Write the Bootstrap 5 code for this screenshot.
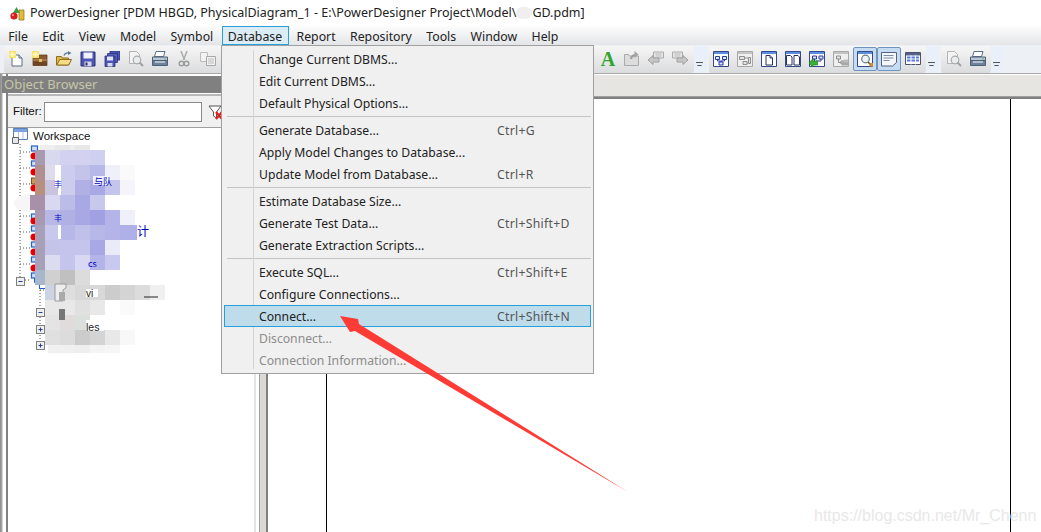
<!DOCTYPE html>
<html lang="en">
<head>
<meta charset="utf-8">
<title>PowerDesigner</title>
<link rel="stylesheet" href="https://cdn.jsdelivr.net/npm/bootstrap@5.3.0/dist/css/bootstrap.min.css">
<style>
html,body{height:100%;margin:0;overflow:hidden;background:#fff}
.pd-app{height:532px;width:1041px;position:relative;font-family:"Noto Sans","Noto Sans CJK SC",sans-serif;font-size:12.3px;color:#222;overflow:hidden}
.pd-title{height:26px;padding-left:10px;gap:5px;font-size:12.5px;color:#222;background:#fff}
.pd-blur{display:inline-block;width:16px;height:12px;background:#efefef;border-radius:6px;vertical-align:-2px}
.pd-menubar{height:19px;padding-left:1px;background:linear-gradient(#fdfdfd,#e3e5e8)}
.pd-mi{padding:0 6.2px;height:19px;line-height:19px;border:1px solid transparent}
.pd-mi.on{border-color:#26a0da;background:#dcecf5;margin-left:2px;padding-left:4.2px}
.pd-tools{height:29px;background:#edf0f5;padding-top:1px;border-bottom:1px solid #a8a8a8}
.pd-tg{height:27px;border-radius:3px;background:linear-gradient(#f6f6f6,#dbdcde);display:flex;align-items:center;padding-bottom:1px}
.pd-ts{width:24px;height:24px;display:flex;align-items:center;justify-content:center}
.pd-ts.sel{background:#c6dcf3;border:1px solid #6e93bd;border-radius:2px}
.pd-ts svg{width:16px;height:16px;display:block}
.pd-a{font-family:"Liberation Serif",serif;font-weight:700;font-size:20px;line-height:16px;color:#2fa52f}
.pd-grip{width:13px;height:27px;position:relative;margin-right:2px;background:#e9f0f9;border-radius:0 3px 3px 0}
.pd-grip::after{content:"";position:absolute;left:2px;bottom:5px;width:7px;height:6px;border-top:1px solid #555;background:linear-gradient(to bottom,transparent 2px,#555 2px,#555 3px,transparent 3px);clip-path:polygon(0 0,100% 0,100% 34%,50% 100%,0 34%)}
.pd-main{height:458px}
.pd-edge{width:8px;background:linear-gradient(to right,#8c8c8c 0,#a8a8a8 2px,#fff 3px,#fff 6px,#808080 6px,#808080 8px)}
.pd-left{width:245px}
.pd-oh{height:17px;margin-left:-6px;margin-top:2px;background:#808080;color:#c6c6a8;font-size:13px;line-height:17px;padding-left:2px;font-family:"Noto Sans",sans-serif}
.pd-filter{height:34px;background:#f0f0f0;border-bottom:1px solid #a0a0a0;border-top:2px solid #b8b8b8;margin-top:1px;padding-left:5px;font-family:"Liberation Sans",sans-serif;font-size:11.5px;color:#111;gap:2px}
.pd-filter .pd-in{width:158px;height:20px;background:#fff;border:1px solid #8a8a8a}
.pd-tree{display:block}
.pd-split{width:17px;background:linear-gradient(to right,#fff 0,#fff 1px,#e4e4e4 1px,#e4e4e4 3px,#fff 3px,#fff 6px,#a0a0a0 6px,#a0a0a0 7px,#dcd9d4 7px,#dcd9d4 13px,#808080 13px,#808080 15px,#fff 15px)}
.pd-strip{height:22px;margin-top:1px;background:#e7e5e1;border-bottom:1px solid #a0a0a0}
.pd-bar{height:2px;background:#808080;margin-bottom:0}
.pd-canvas{flex:1 1 auto;background:#fff}
.pd-page{margin-left:56px;width:685px;height:100%;border-left:1px solid #000;border-right:1px solid #000}
.pd-menu.dropdown-menu{display:block;position:absolute;left:221px;top:45px;width:373px;height:329px;border:1px solid #a0a0a0;border-radius:0;padding:2px;margin:0;background:#f0f0f0;font-size:12.2px;z-index:5}
.pd-menu::before{content:"";position:absolute;left:31px;top:4px;bottom:4px;width:1px;background:#d4d4d4}
.pd-menu .dropdown-item{height:22px;line-height:20px;padding:1px 0 0 34px;color:#222;border:1px solid transparent;background:transparent;display:flex;position:relative}
.pd-menu .dropdown-item .pd-sc{position:absolute;left:272px;color:#555;letter-spacing:.3px}
.pd-menu .dropdown-item.hi{background:#bfdcea;border-color:#26a0da}
.pd-menu .dropdown-item.disabled{color:#8c8c8c}
.pd-menu .dropdown-divider{margin:2px 0 2px 3px;height:1px;border:0;background:#c4c4c4;opacity:1;width:364px}
.pd-over{position:absolute;left:0;top:0;pointer-events:none;z-index:6}
.pd-mark{position:absolute;left:814px;top:506px;font-family:"Liberation Sans",sans-serif;font-size:16px;color:#e8e8e8;line-height:20px;z-index:4}
.mc rect{width:15px;height:15px}
</style>
</head>
<body>
<svg width="0" height="0" class="position-absolute">
<defs>
<symbol id="i-new" viewBox="0 0 16 16"><path d="M4 4h7l3 3v8H4z" fill="#fff" stroke="#5b6b80"/><path d="M11 4v3h3" fill="#cfd8e6" stroke="#5b6b80"/><path d="M1 0h7v7H1z" fill="#f7e26b"/><path d="M3.500 1h2v5h-2zM1.500 2.500h6v2h-6z" fill="#fff7b8"/></symbol>
<symbol id="i-case" viewBox="0 0 16 16"><path d="M5 4h10v10.500H1V6z" fill="#8a5a30" stroke="#5a3718" stroke-width=".7"/><path d="M1 9h14" stroke="#c9965f"/><path d="M1 10.500h14v4H1z" fill="#6f4522"/><path d="M7 8h3v3H7z" fill="#e2c068"/><path d="M0 0h7v7H0z" fill="#f7e26b"/><path d="M2.500 1h2v5h-2zM.5 2.500h6v2h-6z" fill="#fff7b8"/></symbol>
<symbol id="i-open" viewBox="0 0 16 16"><path d="M.5 5.500h5l1 1.500h6v7H.5z" fill="#e0b64a" stroke="#8e6f1e"/><path d="M.8 14l3-5.500h11.700l-2.700 5.500z" fill="#f7dc86" stroke="#8e6f1e"/><path d="M8 4.500C9 2 11 1.500 13 2" fill="none" stroke="#5b7896" stroke-width="1.300"/><path d="M12 0l3.500 2L12 4z" fill="#5b7896"/></symbol>
<symbol id="i-save" viewBox="0 0 16 16"><path d="M1 1h14v14H1z" fill="#4b55b5" stroke="#2a2f78"/><path d="M3.500 1.500h9v6h-9z" fill="#eef2fb"/><path d="M4.500 10.500h7v4.500h-7z" fill="#d7d9e6"/><path d="M5.500 11.500h2v3h-2z" fill="#2a2f78"/></symbol>
<symbol id="i-saveall" viewBox="0 0 16 16"><path d="M6 0h10v9H6z" fill="#4b55b5" stroke="#2a2f78" stroke-width=".8"/><path d="M3.500 2.500h10v9h-10z" fill="#5560bf" stroke="#2a2f78" stroke-width=".8"/><path d="M1 5h10v10.500H1z" fill="#4b55b5" stroke="#2a2f78" stroke-width=".8"/><path d="M3 5.500h6v4H3z" fill="#dfe3f5"/><path d="M3.500 12h5v3.500h-5z" fill="#d7d9e6"/></symbol>
<symbol id="i-prev" viewBox="0 0 16 16"><path d="M1.500 .5h7l3 3v9h-10z" fill="#f4f4f4" stroke="#b4b4b4"/><circle cx="9" cy="9" r="3.800" fill="#e8eef0" stroke="#a8a8a8" stroke-width="1.200"/><path d="M11.500 11.500l3.500 3.500" stroke="#a0a0a0" stroke-width="2"/></symbol>
<symbol id="i-print" viewBox="0 0 16 16"><path d="M4 .5h9l-1.500 5h-9z" fill="#fff" stroke="#5b6f88"/><path d="M.5 6h15v6.500H.5z" fill="#b9c6d6" stroke="#4e6078"/><path d="M.5 9.500h15v5H.5z" fill="#6d829c" stroke="#4e6078"/><path d="M3 10.500h10v1H3z" fill="#fff"/><path d="M12 7.500h2v1h-2z" fill="#5ec06a"/></symbol>
<symbol id="i-cut" viewBox="0 0 16 16"><path d="M5 0l3.500 9M11 0L7.500 9" stroke="#a8a8a8" stroke-width="1.400" fill="none"/><circle cx="5.500" cy="12.500" r="2.300" fill="none" stroke="#9c9c9c" stroke-width="1.400"/><circle cx="10.500" cy="12.500" r="2.300" fill="none" stroke="#9c9c9c" stroke-width="1.400"/></symbol>
<symbol id="i-copy" viewBox="0 0 16 16"><path d="M.5 1.500h7v9h-7z" fill="#f2f2f2" stroke="#bdbdbd"/><path d="M6.500 5.500h9v9h-9z" fill="#f2f2f2" stroke="#a8a8a8"/><path d="M8 8h6M8 10h6M8 12h6" stroke="#bcbcbc"/></symbol>
<symbol id="i-up" viewBox="0 0 16 16"><path d="M.5 3.500h4l1 1.500h9v9.500H.5z" fill="#dcdcdc" stroke="#aaa"/><path d="M7 8c.5-3 2.500-4 5-4" fill="none" stroke="#9a9a9a" stroke-width="2"/><path d="M10.500 0l4 3.500-4 3.500z" fill="#a4a4a4"/></symbol>
<symbol id="i-back" viewBox="0 0 16 16"><path d="M5.500 1h10v6h-10z" fill="#e6e6e6" stroke="#aaa"/><path d="M7.500 3h6M7.500 5h6" stroke="#bbb"/><path d="M0 9l5-4.500v2.500h6v4H5v2.500z" fill="#c6c6c6" stroke="#a0a0a0"/></symbol>
<symbol id="i-fwd" viewBox="0 0 16 16"><path d="M.5 1h10v6H.5z" fill="#e6e6e6" stroke="#aaa"/><path d="M2.500 3h6M2.500 5h6" stroke="#bbb"/><path d="M16 9l-5-4.500v2.500H5v4h6v2.500z" fill="#c6c6c6" stroke="#a0a0a0"/></symbol>
<symbol id="i-win" viewBox="0 0 16 16"><path d="M.5.5h15v15H.5z" fill="#fff" stroke="#34488a"/><path d="M1 1h14v2H1z" fill="#5d8fe0"/></symbol>
<symbol id="i-wing" viewBox="0 0 16 16"><path d="M.5.5h15v15H.5z" fill="#efefef" stroke="#a8a8a8"/><path d="M1 1h14v2H1z" fill="#c4c4c4"/></symbol>
<symbol id="i-dia" viewBox="0 0 16 16"><use href="#i-win"/><path d="M2.500 5.500h4v3h-4zM9.500 5.500h4v3h-4zM6 11h4v3H6z" fill="#dfe8ff" stroke="#2338a0"/><path d="M4.500 8.500V10H8v1M11.500 8.500V10H8" fill="none" stroke="#2338a0"/></symbol>
<symbol id="i-diag" viewBox="0 0 16 16"><use href="#i-wing"/><path d="M2.500 5.500h5v3h-5zM6 10.500h4v3H6zM11.500 6.500h2v6h-2z" fill="#e4e4e4" stroke="#8e8e8e"/><path d="M7.500 7h4M10 12h1.500" fill="none" stroke="#8e8e8e"/></symbol>
<symbol id="i-doc" viewBox="0 0 16 16"><use href="#i-win"/><path d="M5 4.500h4l2.500 2.500v7H5z" fill="#fff" stroke="#27335e"/><path d="M9 4.500V7h2.500" fill="#c6cfe6" stroke="#27335e"/></symbol>
<symbol id="i-docs" viewBox="0 0 16 16"><use href="#i-win"/><path d="M1.500 4.500h4l1.500 1.500v8H1.500zM9 4.500h4l1.500 1.500v8H9z" fill="#fff" stroke="#27335e"/></symbol>
<symbol id="i-dgr" viewBox="0 0 16 16"><use href="#i-win"/><path d="M3.500 5h4v3h-4zM10 5h4v3h-4z" fill="#dfe8ff" stroke="#2338a0"/><path d="M5.500 8v2M12 8v2H7" fill="none" stroke="#2338a0"/><path d="M0 12l4-4.500V10h4.500v4H4v2.500z" fill="#36b336" stroke="#1c7a1c" stroke-width=".7"/></symbol>
<symbol id="i-dgg" viewBox="0 0 16 16"><use href="#i-wing"/><path d="M3.500 5h4v3h-4zM8 10h3.500v3H8z" fill="#e4e4e4" stroke="#8e8e8e"/><path d="M5.500 8v3.500H8" fill="none" stroke="#8e8e8e"/><path d="M9 10.500h7v4H9z" fill="#a8a8a8"/><path d="M11 8.500h4v3h-4z" fill="#bdbdbd"/></symbol>
<symbol id="i-find" viewBox="0 0 16 16"><use href="#i-win"/><circle cx="8.500" cy="8" r="3.800" fill="#eef3f5" stroke="#6a7a8a" stroke-width="1.200"/><path d="M11 11l3 3" stroke="#5a4a3a" stroke-width="1.500"/><path d="M12.500 12h3.500v3.500h-3.500z" fill="#d78a2a"/></symbol>
<symbol id="i-note" viewBox="0 0 16 16"><path d="M.5 1.500h15v10l-4 3.500H.5z" fill="#f4f6fa" stroke="#53627e"/><path d="M2.500 4.500h10M2.500 7h10M2.500 9.500h6" stroke="#7e8ca6"/></symbol>
<symbol id="i-table" viewBox="0 0 16 16"><path d="M.5 1.500h15v12H.5z" fill="#fff" stroke="#4a5268"/><path d="M1 2h14v2.500H1z" fill="#54618a"/><path d="M2 5.500h12v2H2zM2 8.500h12v2H2z" fill="#5a78e6"/><path d="M6 4.500v9M10.500 4.500v9" stroke="#fff"/></symbol>
</defs>
</svg>

<div class="pd-app">
  <div class="pd-title d-flex align-items-center">
    <svg width="15" height="15" viewBox="0 0 15 15" aria-hidden="true"><path d="M9 4h5v10H9z" fill="#e5b93a" stroke="#8a6a10" stroke-width=".7"/><path d="M3 7l3.500-6L10 7z" fill="#3aa046"/><circle cx="4" cy="10" r="3.600" fill="#d82020"/><circle cx="3" cy="9" r="1" fill="#f8a0a0"/></svg>
    <span>PowerDesigner [PDM HBGD, PhysicalDiagram_1 - E:\PowerDesigner Project\Model\<span class="pd-blur"></span>GD.pdm]</span>
  </div>

  <div class="pd-menubar d-flex">
    <div class="pd-mi">File</div><div class="pd-mi">Edit</div><div class="pd-mi">View</div><div class="pd-mi">Model</div><div class="pd-mi">Symbol</div><div class="pd-mi on">Database</div><div class="pd-mi">Report</div><div class="pd-mi">Repository</div><div class="pd-mi">Tools</div><div class="pd-mi">Window</div><div class="pd-mi">Help</div>
  </div>

  <div class="pd-tools d-flex">
    <div class="pd-tg ms-1" style="width:590px;padding-left:0">
      <div class="pd-ts"><svg><use href="#i-new"/></svg></div><div class="pd-ts"><svg><use href="#i-case"/></svg></div><div class="pd-ts"><svg><use href="#i-open"/></svg></div><div class="pd-ts"><svg><use href="#i-save"/></svg></div><div class="pd-ts"><svg><use href="#i-saveall"/></svg></div><div class="pd-ts"><svg><use href="#i-prev"/></svg></div><div class="pd-ts"><svg><use href="#i-print"/></svg></div><div class="pd-ts"><svg><use href="#i-cut"/></svg></div><div class="pd-ts"><svg><use href="#i-copy"/></svg></div>
    </div>
    <div class="pd-tg" style="width:101px;padding-left:3px;margin-left:-1px;">
      <div class="pd-ts"><span class="pd-a">A</span></div><div class="pd-ts"><svg><use href="#i-up"/></svg></div><div class="pd-ts"><svg><use href="#i-back"/></svg></div><div class="pd-ts"><svg><use href="#i-fwd"/></svg></div>
    </div>
    <div class="pd-grip"></div>
    <div class="pd-tg" style="width:217px">
      <div class="pd-ts"><svg><use href="#i-dia"/></svg></div><div class="pd-ts"><svg><use href="#i-diag"/></svg></div><div class="pd-ts"><svg><use href="#i-doc"/></svg></div><div class="pd-ts"><svg><use href="#i-docs"/></svg></div><div class="pd-ts"><svg><use href="#i-dgr"/></svg></div><div class="pd-ts"><svg><use href="#i-dgg"/></svg></div><div class="pd-ts sel"><svg><use href="#i-find"/></svg></div><div class="pd-ts sel"><svg><use href="#i-note"/></svg></div><div class="pd-ts"><svg><use href="#i-table"/></svg></div>
    </div>
    <div class="pd-grip"></div>
    <div class="pd-tg" style="width:50px;padding-left:1px">
      <div class="pd-ts"><svg><use href="#i-prev"/></svg></div><div class="pd-ts"><svg><use href="#i-print"/></svg></div>
    </div>
    <div class="pd-grip"></div>
  </div>

  <div class="pd-main d-flex">
    <div class="pd-edge flex-shrink-0"></div>
    <div class="pd-left flex-shrink-0 d-flex flex-column">
      <div class="pd-oh">Object Browser</div>
      <div class="pd-filter d-flex align-items-center">
        <span>Filter:</span><div class="pd-in"></div>
        <svg class="ms-1" width="16" height="16" viewBox="0 0 16 16" aria-hidden="true"><path d="M1 2h12L8.500 8v6L5.500 12V8z" fill="#fff" stroke="#555"/><path d="M8 8l6 7M14 8l-6 7" stroke="#e02020" stroke-width="2.200"/></svg>
      </div>
      <svg class="pd-tree" width="245" height="404" viewBox="8 128 245 404" role="img" aria-label="Object browser tree">
        <g fill="none" stroke="#555" stroke-dasharray="1 2">
          <path d="M20 144V277M20 152H31M20 168H31M20 184H31M20 216H31M20 232H31M20 248H31M20 264H31M25 280H31M40 284V345M40 290H57M44 312H57"/>
        </g>
        <path d="M13.500 128.500h14v11h-14z" fill="#fff" stroke="#5b7fb8"/><path d="M14 129h13v3H14z" fill="#7ba2e0"/><path d="M18.500 132v7M23 132v7" stroke="#a8c0e6"/><path d="M12.500 137.500h6v6h-6z" fill="#e4e8ee" stroke="#666"/>
        <text x="33" y="140" font-family="Liberation Sans,sans-serif" font-size="11.500" fill="#111">Workspace</text>
        <g fill="#cfe0f8" stroke="#2460c8" stroke-width="1.200">
          <rect x="31.500" y="146" width="6" height="5"/><rect x="31.500" y="161" width="6" height="5"/><rect x="31.500" y="214" width="6" height="5"/><rect x="31.500" y="226" width="6" height="5"/><rect x="31.500" y="242" width="6" height="5"/><rect x="31.500" y="257" width="6" height="5"/><rect x="31.500" y="273" width="6" height="5"/>
        </g>
        <rect x="31.500" y="178" width="6" height="6" fill="#c89860" stroke="#7a5020"/>
        <g fill="#e60000">
          <circle cx="34" cy="156" r="3.500"/><circle cx="34" cy="172" r="3.500"/><circle cx="34" cy="188" r="3.500"/><circle cx="34" cy="221" r="3.500"/><circle cx="34" cy="237" r="3.500"/><circle cx="34" cy="252" r="3.500"/><circle cx="34" cy="268" r="3.500"/>
        </g>
        <g fill="#eee" stroke="#808080">
          <rect x="16.500" y="277.500" width="8" height="8"/><rect x="36.500" y="308.500" width="8" height="8"/><rect x="36.500" y="325.500" width="8" height="8"/><rect x="36.500" y="341.500" width="8" height="8"/>
        </g>
        <path d="M18.500 281.500h4M38.500 312.500h4M38.500 329.500h4M40.500 327.500v4M38.500 345.500h4M40.500 343.500v4" stroke="#2040a0"/>
        <path d="M34.500 278v4.500h5" fill="none" stroke="#2460c8"/>
        <rect x="39.500" y="283.500" width="6" height="5" fill="#fff" stroke="#2460c8"/>
        <ellipse cx="30" cy="203" rx="16" ry="9" fill="#f6f6f6"/>
        <g class="mc" shape-rendering="crispEdges">
          <rect x="40" y="145" fill="#eee"/><rect x="55" y="145" fill="#e8e8e8" /><rect x="70" y="145" fill="#eee"/><rect x="75" y="145" fill="#e8e8e8"/>
          <rect x="35" y="150" fill="#a89ab0" style="width:10px"/><rect x="45" y="150" fill="#d8d8ee"/><rect x="60" y="150" fill="#d2d2f0"/><rect x="75" y="150" fill="#d2d2f0"/><rect x="90" y="150" fill="#cfcff0"/>
          <rect x="35" y="165" fill="#b09090" style="width:10px"/><rect x="45" y="165" fill="#dcdcec"/><rect x="60" y="165" fill="#ccccee"/><rect x="75" y="165" fill="#c4c4ea"/><rect x="90" y="165" fill="#b8b8e8"/><rect x="105" y="165" fill="#f0f0fa"/><rect x="120" y="165" fill="#fafafa"/>
          <rect x="35" y="180" fill="#b89080" style="width:10px"/><rect x="45" y="180" fill="#c8c4e0"/><rect x="60" y="180" fill="#ccccee"/><rect x="75" y="180" fill="#b0b0e4"/><rect x="90" y="180" fill="#a8a8e4"/><rect x="105" y="180" fill="#c4c4ec"/><rect x="120" y="180" fill="#f4f4fa"/>
          <rect x="30" y="195" fill="#a890a8"/><rect x="45" y="195" fill="#d8d8f0"/><rect x="60" y="195" fill="#bcbce8"/><rect x="75" y="195" fill="#a8a8e4"/><rect x="90" y="195" fill="#c8c8ec"/>
          <rect x="35" y="210" fill="#a898b0" style="width:10px"/><rect x="45" y="210" fill="#b8b8e6"/><rect x="60" y="210" fill="#b0b0e4"/><rect x="75" y="210" fill="#a8a8e4"/><rect x="90" y="210" fill="#a0a0e2"/><rect x="105" y="210" fill="#b4b4e8"/><rect x="120" y="210" fill="#f0f0fa"/>
          <rect x="35" y="225" fill="#a8a0b8" style="width:10px"/><rect x="45" y="225" fill="#c8c8ec"/><rect x="60" y="225" fill="#b8b8e8"/><rect x="75" y="225" fill="#c0c0ea"/><rect x="90" y="225" fill="#b8b8e8"/><rect x="105" y="225" fill="#b4b4e8"/><rect x="120" y="225" fill="#b0b0e8" style="width:17px"/>
          <rect x="35" y="240" fill="#a8a0b8" style="width:10px"/><rect x="45" y="240" fill="#c4c4e8"/><rect x="60" y="240" fill="#c4c4ec"/><rect x="75" y="240" fill="#c4c4ec"/><rect x="90" y="240" fill="#a8a8e4"/><rect x="105" y="240" fill="#ebebf7"/>
          <rect x="35" y="255" fill="#a8a0b8" style="width:10px"/><rect x="45" y="255" fill="#dcdcf0"/><rect x="60" y="255" fill="#c4c4ec"/><rect x="75" y="255" fill="#d8d8f4"/><rect x="90" y="255" fill="#b4b4e8"/><rect x="105" y="255" fill="#c8c8f0"/>
          <rect x="35" y="270" fill="#a8b8cc" style="width:10px"/><rect x="45" y="270" fill="#d0d0d0"/><rect x="60" y="270" fill="#c0c0c0"/><rect x="75" y="270" fill="#dcdcdc"/>
          <rect x="45" y="285" fill="#ccd4e4"/><rect x="60" y="285" fill="#dedede"/><rect x="75" y="285" fill="#d8d8d8"/><rect x="90" y="285" fill="#d8d8d8"/><rect x="105" y="285" fill="#ccc"/><rect x="120" y="285" fill="#d4d4d4"/><rect x="135" y="285" fill="#dcdcdc"/><rect x="150" y="285" fill="#f0f0f0"/>
          <rect x="45" y="300" fill="#e8e8e8"/><rect x="60" y="300" fill="#e8e8e8"/><rect x="75" y="300" fill="#e0e0e0"/><rect x="90" y="300" fill="#e8e8e8"/><rect x="120" y="300" fill="#fafafa"/>
          <rect x="45" y="315" fill="#e4e4e4"/><rect x="60" y="315" fill="#e0dcdc"/><rect x="75" y="315" fill="#dce0dc"/>
          <rect x="45" y="330" fill="#e0e0e0"/><rect x="60" y="330" fill="#dcdcdc"/><rect x="75" y="330" fill="#ccc"/><rect x="90" y="330" fill="#d4d4d4"/><rect x="105" y="330" fill="#e8e8e8"/><rect x="120" y="330" fill="#f8f8f8"/>
          <rect x="48" y="345" fill="#f0f0f0" style="height:8px"/><rect x="60" y="345" fill="#f0f0f0" style="height:8px"/><rect x="75" y="345" fill="#eee" style="height:8px"/><rect x="90" y="345" fill="#f4f4f4" style="height:8px"/><rect x="105" y="345" fill="#f6f6f6" style="height:8px"/>
        </g>
        <path d="M55 165h6v30h-3v-8h-3z" fill="#fff"/><path d="M58 225h3v14h-3z" fill="#fff"/><path d="M93 176h15v9H93z" fill="#fff" opacity=".8"/><path d="M86 289h12v8H86z" fill="#fff"/><path d="M86 320h18v11H86z" fill="#fff"/>
        <g font-family="Noto Sans CJK SC,Noto Sans,sans-serif" font-size="8" fill="#0000c0">
          <text x="54" y="187">丰</text><text x="94" y="185" font-size="9">与队</text><text x="54" y="221">丰</text><text x="137" y="236" font-size="12">计</text><text x="88" y="267" font-size="9">cs</text>
        </g>
        <text x="86" y="331" font-family="Liberation Sans,sans-serif" font-size="10.500" fill="#222">les</text>
        <text x="86" y="297" font-family="Liberation Sans,sans-serif" font-size="10" fill="#222">vi</text>
        <path d="M144 297h14" stroke="#222"/>
        <path d="M55 284h11v4l-3 2v11h-8z" fill="#eee" stroke="#999"/><path d="M59 292h6v9h-6z" fill="#aaa"/><path d="M59 309h6v11h-6z" fill="#777"/>
      </svg>
    </div>
    <div class="pd-split flex-shrink-0"></div>
    <div class="d-flex flex-column flex-grow-1">
      <div class="pd-strip"></div>
      <div class="pd-bar"></div>
      <div class="pd-canvas"><div class="pd-page"></div></div>
    </div>
  </div>

  <div class="pd-menu dropdown-menu">
    <a class="dropdown-item">Change Current DBMS...</a>
    <a class="dropdown-item">Edit Current DBMS...</a>
    <a class="dropdown-item">Default Physical Options...</a>
    <hr class="dropdown-divider">
    <a class="dropdown-item">Generate Database...<span class="pd-sc">Ctrl+G</span></a>
    <a class="dropdown-item">Apply Model Changes to Database...</a>
    <a class="dropdown-item">Update Model from Database...<span class="pd-sc">Ctrl+R</span></a>
    <hr class="dropdown-divider">
    <a class="dropdown-item">Estimate Database Size...</a>
    <a class="dropdown-item">Generate Test Data...<span class="pd-sc">Ctrl+Shift+D</span></a>
    <a class="dropdown-item">Generate Extraction Scripts...</a>
    <hr class="dropdown-divider">
    <a class="dropdown-item">Execute SQL...<span class="pd-sc">Ctrl+Shift+E</span></a>
    <a class="dropdown-item">Configure Connections...</a>
    <a class="dropdown-item hi">Connect...<span class="pd-sc">Ctrl+Shift+N</span></a>
    <a class="dropdown-item disabled">Disconnect...</a>
    <a class="dropdown-item disabled">Connection Information...</a>
  </div>

  <div class="pd-mark">https://blog.csdn.net/Mr_Chenn</div>
  <svg class="pd-over" width="1041" height="532" viewBox="0 0 1041 532" aria-hidden="true">
    <path d="M340 316L358 319L359 324L628 492L355 331L350 332Z" fill="#ff3b36"/>
  </svg>
</div>
</body>
</html>
